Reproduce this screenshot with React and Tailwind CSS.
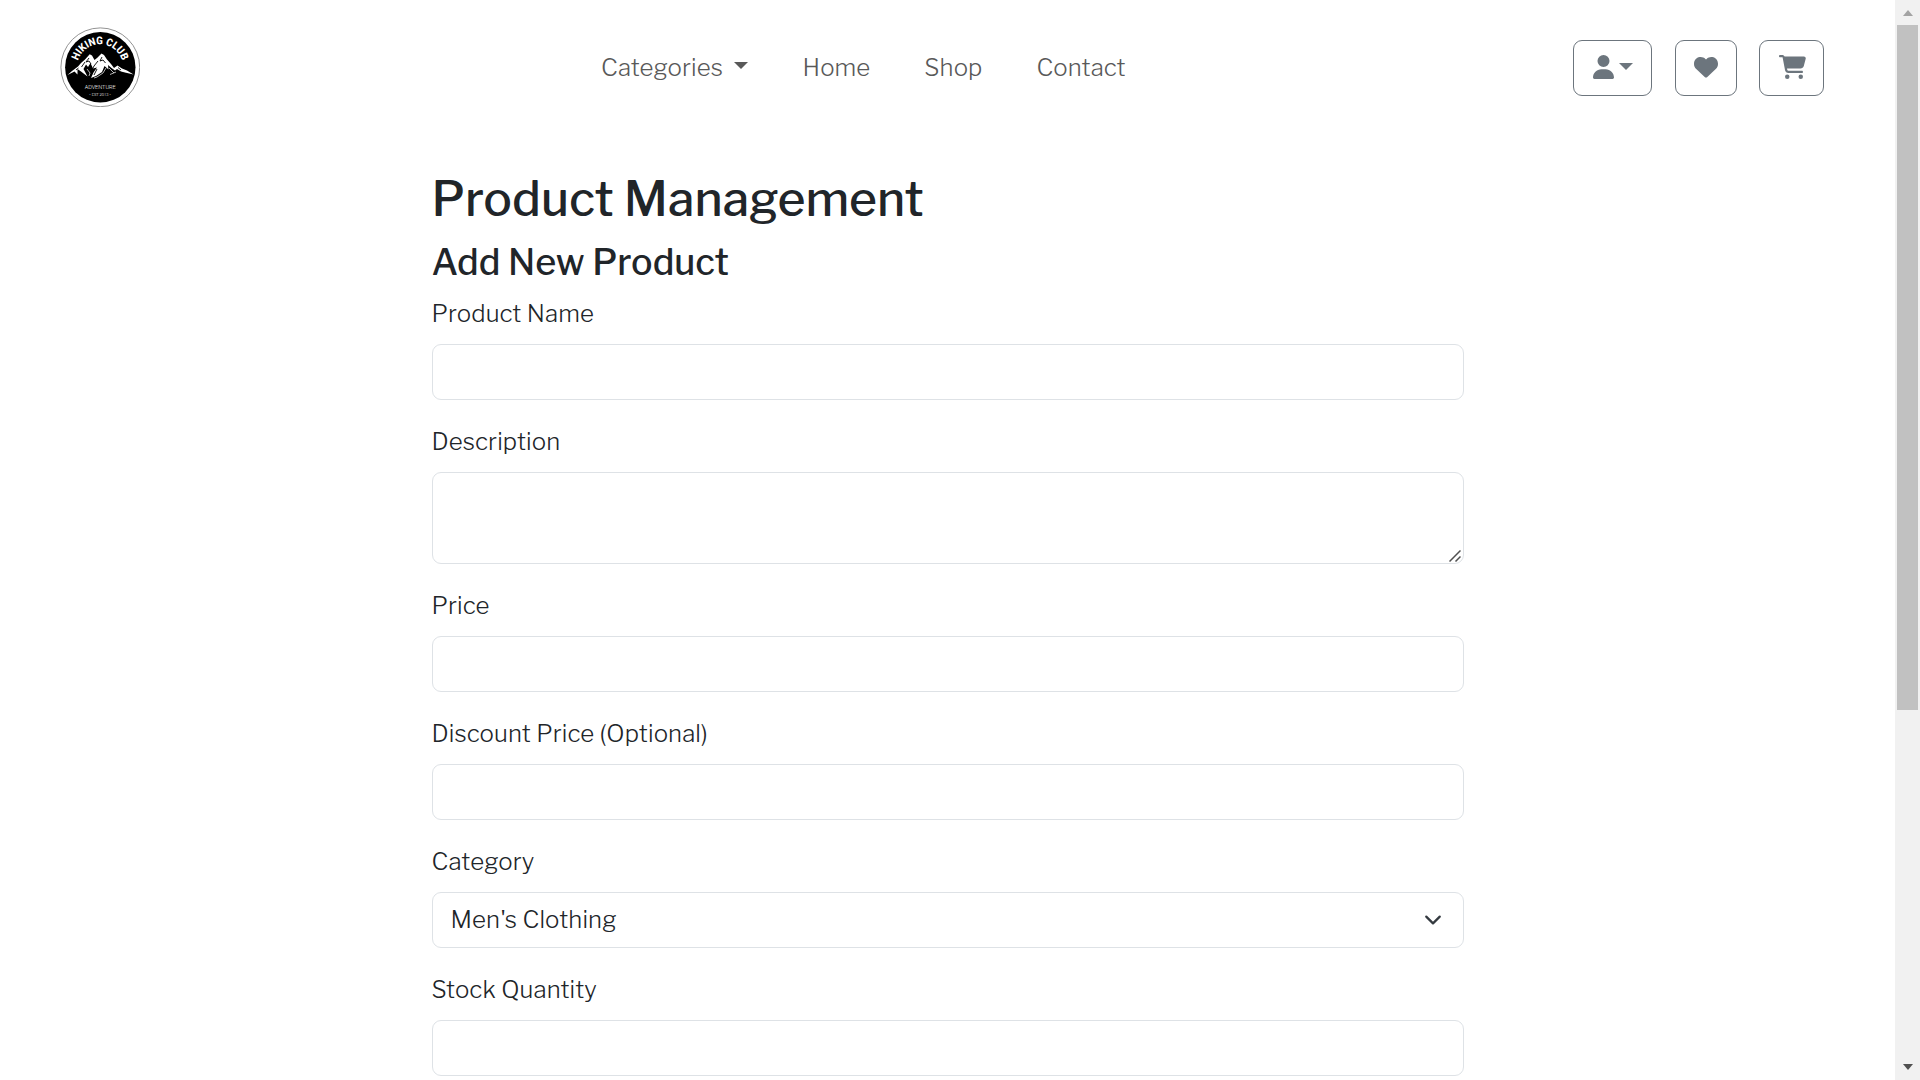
import React from "react";
import { FaUser, FaHeart, FaCartShopping } from "react-icons/fa6";

function Caret({ className = "" }) {
  return (
    <span
      className={
        "inline-block h-0 w-0 border-x-[7.2px] border-t-[7.2px] border-x-transparent border-t-current " +
        className
      }
    />
  );
}

function Logo() {
  return (
    <svg viewBox="0 0 80 80" className="mb-px block h-20 w-20" aria-label="Hiking Club">
      <defs>
        <path id="logo-arc" d="M17.3 44 A23 23 0 1 1 62.7 44" />
      </defs>
      <circle cx="40.3" cy="40.3" r="39.4" fill="#fff" stroke="#777" strokeWidth="0.8" />
      <circle cx="40.3" cy="40.3" r="35.2" fill="#000" />
      <text
        fill="#fff"
        fontFamily="Roboto, sans-serif"
        fontWeight="800"
        fontSize="10.6"
        textAnchor="middle"
        textLength="59"
        lengthAdjust="spacingAndGlyphs"
      >
        <textPath href="#logo-arc" startOffset="50%">
          HIKING CLUB
        </textPath>
      </text>
      <path
        d="M7.5 48 L12 44 L18 39.5 L21 36 L25 32.5 L29.7 27.3 L32 28.5 L34.5 33 L37 31 L41.5 26.5 L44 28 L47 32.5 L51 37 L54 41 L57.5 38.5 L62 41.5 L67 43.5 L73.5 47.5 L66 45.8 L61 44.5 L57 42 L55 43.5 L51.5 41 L48 38 L48.5 42.5 L44.5 39 L42 45 L36 49 L31 51 L33.5 45.5 L37 40.5 L33 41.5 L30.5 36 L28 40 L26 37.5 L23.5 42 L27.5 49.5 L21 44.5 L17.5 42 L17.5 47.5 L14.5 44.5 Z"
        fill="#fff"
      />
      <path
        d="M29 31 L26 35 L29 34 L31 37 M42 30 L40 34 L43 33 L45.5 36 M38 34 L34 39 L30 47 M37 42 L34 48 M18.5 41 L16 43 M58 40.5 L61 43 M25 35 L21.5 40"
        fill="none"
        stroke="#000"
        strokeWidth="0.9"
      />
      <path
        d="M27 42 L30 46 L29 49 M46 41 L43 46 L37 50 L34 51 M56 45 L50 47.5 M49 41 L54 46"
        fill="none"
        stroke="#fff"
        strokeWidth="0.7"
      />
      <text x="40.2" y="62.4" fill="#fff" fontFamily="Roboto, sans-serif" fontSize="5.6" textAnchor="middle" textLength="31" lengthAdjust="spacingAndGlyphs">
        ADVENTURE
      </text>
      <text x="40.1" y="68.6" fill="#fff" fontFamily="Roboto, sans-serif" fontSize="3.6" textAnchor="middle" textLength="21.5" lengthAdjust="spacingAndGlyphs">
        • EST 2013 •
      </text>
    </svg>
  );
}

const outline =
  "flex h-14 items-center justify-center rounded-[9px] border border-[#6c757d] text-[#6c757d]";
const control = "block w-full rounded-[9px] border border-[#dee2e6] bg-white outline-none";

function Header() {
  return (
    <header className="flex h-[135px] items-center justify-between pr-[71px] pl-[60px]">
      <Logo />
      <nav className="mr-auto ml-[461px] flex gap-[54px] leading-9 tracking-[0.09px] text-[#595959]">
        <a className="flex items-center">
          Categories
          <Caret className="mr-[0.8px] mb-[4px] ml-[10.8px]" />
        </a>
        <a>Home</a>
        <a>Shop</a>
        <a>Contact</a>
      </nav>
      <div className="flex items-center">
        <button className={outline + " mr-[23px] w-[79px] pb-px pl-px"}>
          <FaUser className="h-6 w-[21px]" />
          <Caret className="mb-[2px] ml-[5.5px]" />
        </button>
        <button className={outline + " mr-[22px] w-[62px] pb-px"}>
          <FaHeart className="h-6 w-6" />
        </button>
        <button className={outline + " w-[65px] pb-px pl-px"}>
          <FaCartShopping className="h-6 w-[27px]" />
        </button>
      </div>
    </header>
  );
}

function Field({ label, children }) {
  return (
    <div className="mb-6">
      <label className="mb-3 block leading-9 tracking-[0.11px]">{label}</label>
      {children}
    </div>
  );
}

function ProductForm() {
  return (
    <main className="mx-auto mt-9 w-[1032px]">
      <h1 className="mb-3 text-5xl leading-[57.6px] font-medium">Product Management</h1>
      <h2 className="mb-3 text-4xl leading-[43.2px] font-medium">Add New Product</h2>
      <Field label="Product Name">
        <input className={control + " h-14"} />
      </Field>
      <Field label="Description">
        <div className="relative">
          <textarea className={control + " h-[92px] resize-none"} />
          <svg
            viewBox="0 0 12 12"
            className="pointer-events-none absolute right-[3px] bottom-[2px] h-3 w-3"
            fill="none"
            stroke="#505050"
            strokeWidth="1.5"
          >
            <path d="M0.5 11.5 L11.5 0.5 M6.5 11.5 L11.5 6.5" />
          </svg>
        </div>
      </Field>
      <Field label="Price">
        <input className={control + " h-14"} />
      </Field>
      <Field label="Discount Price (Optional)">
        <input className={control + " h-14"} />
      </Field>
      <Field label="Category">
        <div className={control + " flex h-14 items-center justify-between pr-[21px] pl-[18px]"}>
          <span className="leading-9 tracking-[0.11px]">Men's Clothing</span>
          <svg viewBox="0 0 16 16" className="h-[18px] w-[18px]" fill="none" stroke="#343a40" strokeWidth="2" strokeLinecap="round" strokeLinejoin="round">
            <path d="m2 5 6 6 6-6" />
          </svg>
        </div>
      </Field>
      <Field label="Stock Quantity">
        <input className={control + " h-14"} />
      </Field>
    </main>
  );
}

function Scrollbar() {
  return (
    <div className="flex w-[25px] flex-col items-center bg-[#f1f1f1]">
      <div className="flex h-[25px] items-center">
        <span className="h-0 w-0 border-x-[5.5px] border-b-[6px] border-x-transparent border-b-[#a3a3a3]" />
      </div>
      <div className="h-[685px] w-[21px] bg-[#c1c1c1]" />
      <div className="mt-auto flex h-[26px] items-center">
        <span className="h-0 w-0 border-x-[5.5px] border-t-[6px] border-x-transparent border-t-[#505050]" />
      </div>
    </div>
  );
}

export default function App() {
  return (
    <div className="flex h-[1080px] w-[1920px] overflow-hidden bg-white font-['Libre_Franklin','Open_Sans',sans-serif] text-2xl font-light text-[#212529]">
      <div className="h-full flex-1 overflow-hidden">
        <Header />
        <ProductForm />
      </div>
      <Scrollbar />
    </div>
  );
}
